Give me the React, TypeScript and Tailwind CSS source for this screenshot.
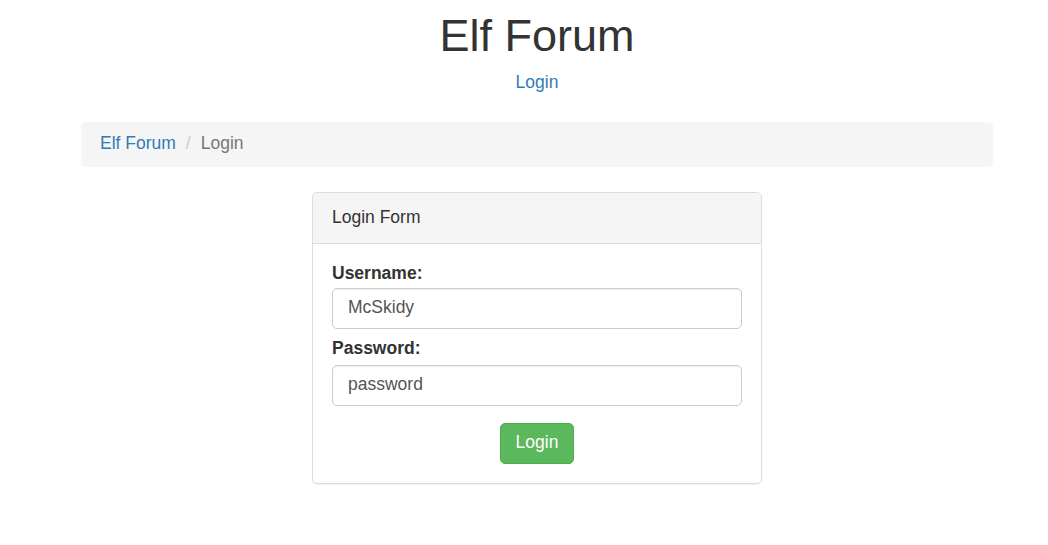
export default function App() {
  return (
    <div className="min-h-[545px] bg-white pl-[26px] text-[#333] font-['Liberation_Sans',Arial,sans-serif] text-[17.5px] leading-[1.42857]">
      <div className="flex flex-col items-center pt-[11px]">
        <h1 className="text-[45px] leading-[1.1] font-normal">Elf Forum</h1>
        <a href="#" className="mt-[9px] text-[#337ab7]">Login</a>
      </div>

      <div className="mx-[55px] mt-[28px] flex h-[45px] items-center rounded-[5px] bg-[#f5f5f5] px-[19px] pb-[2px]">
        <a href="#" className="text-[#337ab7]">Elf Forum</a>
        <span className="px-[10px] text-[#ccc]">/</span>
        <span className="text-[#777]">Login</span>
      </div>

      <div className="mx-auto mt-[25px] w-[450px] rounded-[5px] border border-[#ddd] shadow-[0_1px_1px_rgba(0,0,0,0.05)]">
        <div className="flex h-[51px] items-center rounded-t-[5px] border-b border-[#ddd] bg-[#f5f5f5] px-[19px] pb-[2px]">
          Login Form
        </div>
        <div className="flex flex-col px-[19px] pt-[17px] pb-[19px]">
          <label className="font-bold leading-[25px]">Username:</label>
          <input
            readOnly
            value="McSkidy"
            className="mt-[2px] h-[41px] rounded-[5px] border border-[#ccc] px-[15px] pb-[2px] text-[#555] shadow-[inset_0_1px_1px_rgba(0,0,0,0.075)] outline-none"
          />
          <label className="mt-[7px] font-bold leading-[25px]">Password:</label>
          <input
            readOnly
            value="password"
            className="mt-[4px] h-[41px] rounded-[5px] border border-[#ccc] px-[15px] pb-[2px] text-[#555] shadow-[inset_0_1px_1px_rgba(0,0,0,0.075)] outline-none"
          />
          <div className="mt-[17px] flex justify-center">
            <button className="h-[41px] w-[74px] rounded-[5px] border border-[#4cae4c] bg-[#5cb85c] pb-[2px] text-white">
              Login
            </button>
          </div>
        </div>
      </div>
    </div>
  );
}
